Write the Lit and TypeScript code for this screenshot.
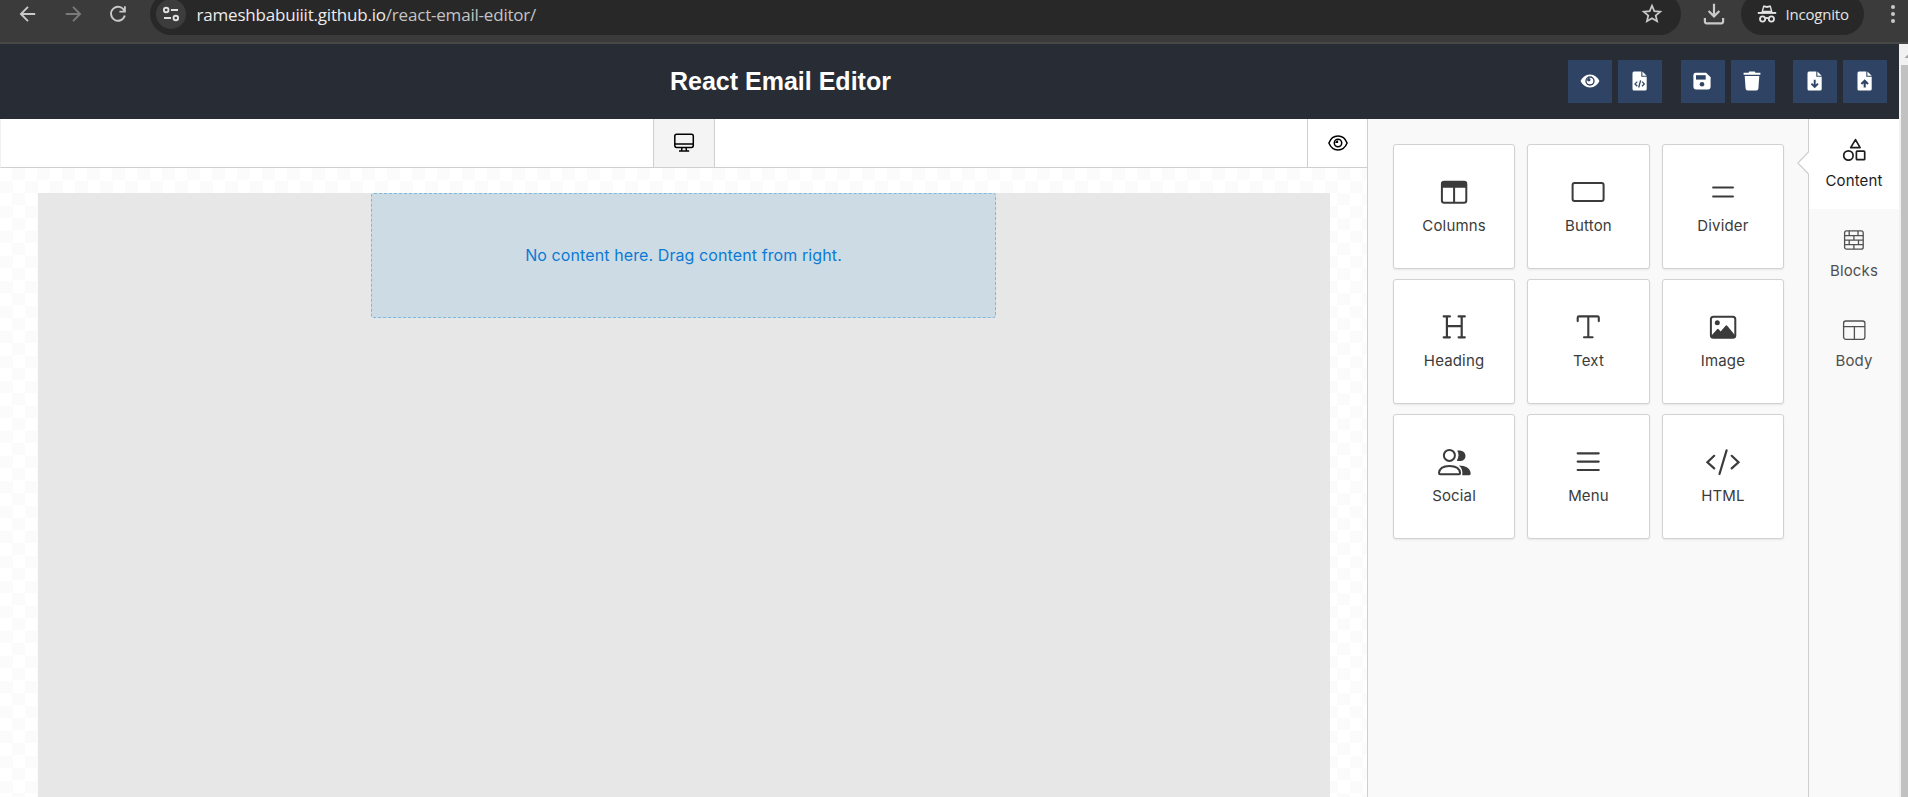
import { LitElement, html, svg, css, SVGTemplateResult } from "lit";
import { customElement } from "lit/decorators.js";

/* Browser chrome glyphs, 24 x 24 */
const back = svg`<path d="M19.2 12H5.3M12 4.9L4.9 12l7.1 7.1" fill="none" stroke="currentColor" stroke-width="1.9"/>`;
const forward = svg`<path d="M4.800 12h13.900M12 4.900l7.100 7.100-7.100 7.100" fill="none" stroke="currentColor" stroke-width="1.900"/>`;
const reload = svg`<path d="M18.300 8.600A7 7 0 1 0 18.800 13.600M18.900 4.200V9.600H13.400" fill="none" stroke="currentColor" stroke-width="1.900"/>`;
const tune = svg`<g fill="none" stroke="currentColor" stroke-width="1.900"><circle cx="7.200" cy="8" r="2.300"/><path d="M12 8h7M5 16h7"/><circle cx="16.800" cy="16" r="2.300"/></g>`;
const star = svg`<path d="M12 3.600l2.300 5.500 6 .5-4.600 3.900 1.400 5.800L12 16.200l-5.100 3.100 1.400-5.800-4.600-3.900 6-.5z" fill="none" stroke="currentColor" stroke-width="1.700"/>`;
const download = svg`<path d="M12 1.800v12.400M6.600 9l5.400 5.400L17.400 9M2.900 16v3.600q0 1.700 1.700 1.700h14.800q1.700 0 1.700-1.700V16" fill="none" stroke="currentColor" stroke-width="2.200"/>`;
const incognito = svg`<path d="M6.400 10.200L8 4.200q.3-1.100 1.400-.8l2.600.7 2.600-.7q1.100-.3 1.400.8l1.600 6z" fill="currentColor"/><path d="M9.200 5.200l2.800.8 2.800-.8 1 3.600H8.200z" fill="#282828"/><path d="M2.800 10h18.400v1.900H2.800z" fill="currentColor"/><g fill="none" stroke="currentColor" stroke-width="1.800"><circle cx="7.600" cy="17" r="2.600"/><circle cx="16.400" cy="17" r="2.600"/><path d="M10.200 16.500q1.800-1.100 3.600 0"/></g>`;
const dots = svg`<g fill="currentColor"><circle cx="12" cy="5" r="2"/><circle cx="12" cy="12" r="2"/><circle cx="12" cy="19" r="2"/></g>`;

/* Header action glyphs, 20 x 20 */
const eye = svg`<path d="M10 3.600c4.500 0 7.800 3 9.400 6.400-1.600 3.400-4.900 6.400-9.400 6.400S2.200 13.400.6 10C2.200 6.600 5.500 3.600 10 3.600z" fill="#fff"/><circle cx="10" cy="10" r="4.700" fill="#2f4464"/><circle cx="10" cy="10" r="3.300" fill="#fff"/><circle cx="8.800" cy="8.800" r="1.700" fill="#2f4464"/>`;
const sheet = svg`<path d="M4 .6h7.300v5.200h5.400v12.100q0 1.600-1.600 1.600H4q-1.500 0-1.500-1.600V2.200Q2.500.6 4 .6z" fill="#fff"/><path d="M12.400.6l4.300 4.100h-4.300z" fill="#fff"/>`;
const fileCode = svg`${sheet}<path d="M7.300 10.600l-2.300 2.300 2.300 2.300M12 10.600l2.300 2.300-2.300 2.300M10.600 9.300l-1.900 7.200" fill="none" stroke="#2f4464" stroke-width="1.300"/>`;
const fileDown = svg`${sheet}<path d="M9.700 8.800v7M6.400 12.700l3.300 3.300 3.300-3.300" fill="none" stroke="#2f4464" stroke-width="1.900"/>`;
const fileUp = svg`${sheet}<path d="M9.700 16.600v-6M6.400 13l3.300-3.300L13 13" fill="none" stroke="#2f4464" stroke-width="2.100"/>`;
const save = svg`<path d="M3.700 1.700h10.400l4.500 4.500v9.900q0 2.300-2.300 2.300H3.700q-2.300 0-2.300-2.300V4q0-2.300 2.300-2.300z" fill="#fff"/><path d="M4 4.200h9.700v4.400H4z" fill="#2f4464"/><circle cx="10" cy="13.300" r="2.300" fill="#2f4464"/>`;
const trash = svg`<path d="M1.600 1.700h5l.6-1.100h5.600l.6 1.100h5v2H1.600zM2.700 5h14.600l-.9 12.600q-.2 1.900-2 1.900H5.600q-1.800 0-2-1.900z" fill="#fff"/>`;

/* Toolbar glyphs, 24 x 24 */
const desktop = svg`<g fill="none" stroke="#000" stroke-width="1.500"><rect x="2.800" y="3.200" width="18.500" height="13.200" rx="1.800"/><path d="M2.800 12.900h18.500M10 16.500l-.5 3.400M14 16.500l.5 3.400M7 20.100h10.200"/></g>`;
const eyeLine = svg`<g fill="none" stroke="#000" stroke-width="1.500"><path d="M2.900 12C4.700 7.500 8 5.100 12 5.100s7.300 2.400 9.100 6.900c-1.800 4.500-5.100 6.900-9.100 6.900S4.700 16.500 2.900 12z"/><circle cx="12" cy="12" r="3.700"/></g><path d="M9.200 12h2.900V9.200A3.300 3.300 0 0 0 9.200 12z" fill="#000"/>`;

/* Tool glyphs, 40 x 32 */
const columns = svg`<rect x="7.900" y="5.700" width="24.400" height="21" rx="2.300" fill="none" stroke="currentColor" stroke-width="2"/><path d="M7.500 6h25v5.800h-25zM19.100 11h2v16h-2z" fill="currentColor"/>`;
const button = svg`<rect x="4.600" y="7.100" width="31" height="17.900" rx="2" fill="none" stroke="currentColor" stroke-width="2"/>`;
const divider = svg`<path d="M10.100 11.500h19.900M10.100 20.500h19.900" stroke="currentColor" stroke-width="2" stroke-linecap="round"/>`;
const heading = svg`<path d="M9.700 5.400h6.200M24.600 5.400h6.200M9.700 26.300h6.200M24.600 26.300h6.200M12.900 5.400v20.900M27.700 5.400v20.900M12.900 15.200h14.800" stroke="currentColor" stroke-width="2.200" stroke-linecap="round"/>`;
const text = svg`<path d="M9.700 10.100V6.700q0-1.300 1.300-1.300h18.500q1.300 0 1.300 1.300v3.400M20.300 5.400v20.900M16 26.300h8.600" fill="none" stroke="currentColor" stroke-width="2.100" stroke-linecap="round"/>`;
const image = svg`<rect x="7.900" y="5.700" width="24.400" height="21" rx="2.500" fill="none" stroke="currentColor" stroke-width="2"/><circle cx="14.300" cy="11.800" r="2.500" fill="currentColor"/><path d="M8.500 26.500V24.500l5.600-6.300q.8-.8 1.600 0l1.900 2.400 5-5.900q.8-.9 1.600 0l7.600 9.300v2.500z" fill="currentColor"/>`;
const social = svg`<g fill="none" stroke="currentColor" stroke-width="2"><circle cx="15.400" cy="9.400" r="5.500"/><path d="M6 28.200q-1 0-1-1.200c.4-4.600 4-7.100 10.400-7.100s10.300 2.500 10.700 7.100q0 1.200-1 1.200z"/></g><path d="M23.200 4.600c4.600-.8 8.300 1.400 8.300 5.300s-3.900 6.200-8.700 4.800c2.100-3.300 2.300-6.800.4-10.100zM24.800 19.400c7 .2 11.500 2.500 11.900 8.200q0 1.600-1.300 1.600h-7.200c.7-4-.2-7.400-3.400-9.800z" fill="currentColor"/>`;
const menu = svg`<path d="M9.700 7.300h21M9.700 15.600h21M9.700 24h21" stroke="currentColor" stroke-width="2.200" stroke-linecap="round"/>`;
const code = svg`<path d="M11.200 9.800L4.400 16.200l6.800 6.200M28.700 9.800l6.800 6.400-6.800 6.200M23.600 4.400L16.500 28" fill="none" stroke="currentColor" stroke-width="2.200" stroke-linecap="round"/>`;

/* Rail glyphs, 24 x 24 */
const shapes = svg`<g fill="none" stroke="currentColor" stroke-width="1.700" stroke-linejoin="round"><path d="M13.500 1.600l4.600 8H8.700z"/><circle cx="6.400" cy="17.500" r="4.700"/><rect x="14.400" y="13.100" width="8.300" height="8.600" rx=".8"/></g>`;
const blocks = svg`<g fill="none" stroke="currentColor" stroke-width="1.300"><rect x="2.600" y="2.900" width="18.600" height="18.300" rx="2"/><path d="M2.600 7.600h18.600M2.600 12.100h18.600M2.600 16.700h18.600M7.200 3v4.600M16 3v4.600M11.900 7.600v4.500M7.200 12.100v4.600M16.500 12.100v4.600M11.900 16.700v4.500"/></g>`;
const body = svg`<g fill="none" stroke="currentColor" stroke-width="1.300"><rect x="1.600" y="3" width="21.300" height="18.300" rx="2.200"/><path d="M1.600 8.700h21.300M12.400 8.700v12.600"/></g>`;

const icon = (w: number, h: number, art: SVGTemplateResult) =>
  html`<svg width=${w} height=${h} viewBox="0 0 ${w} ${h}" aria-hidden="true">${art}</svg>`;

@customElement("browser-bar")
class BrowserBar extends LitElement {
  static styles = css`
    :host { display: block; height: 42px; overflow: hidden; background: #3b3b3b; border-bottom: 2px solid #484946; color: #c9c9c9; }
    svg { display: block; flex: none; }
    .row { display: flex; align-items: center; height: 42px; margin-top: -7px; padding-left: 15.5px; padding-right: 3.5px; }
    .nav { display: flex; gap: 21px; margin: -1px 20.5px 0 0; }
    .off { color: #7a7a7a; }
    .url { flex: 1; display: flex; align-items: center; height: 42px; padding: 0 17.5px 0 6px; border-radius: 21px; background: #282828; box-sizing: border-box; }
    .site { display: flex; align-items: center; justify-content: center; width: 30px; height: 30px; border-radius: 50%; background: #3c3c3c; color: #e0e0e0; }
    .address { flex: 1; margin: 2px 0 0 10.5px; font: 17px/24px "Open Sans", "Noto Sans", sans-serif; letter-spacing: -0.2px; color: #c4c4c4; white-space: nowrap; }
    .host { color: #ececec; }
    .download { margin: 0 15.5px 0 20.5px; }
    .incognito { display: flex; align-items: center; width: 123px; height: 42px; margin: -1px 16.5px 0 0; padding-left: 14px; box-sizing: border-box; border-radius: 21px; background: #282828; color: #e3e3e3; font: 15px/20px "Open Sans", "Noto Sans", sans-serif; letter-spacing: -0.2px; }
    .incognito svg { margin-right: 6.5px; }
  `;
  render() {
    return html`<div class="row">
      <div class="nav">${icon(24, 24, back)}<span class="off">${icon(24, 24, forward)}</span>${icon(24, 24, reload)}</div>
      <div class="url">
        <span class="site">${icon(24, 24, tune)}</span>
        <span class="address"><span class="host">rameshbabuiiit.github.io</span>/react-email-editor/</span>
        ${icon(24, 24, star)}
      </div>
      <span class="download">${icon(24, 24, download)}</span>
      <div class="incognito">${icon(24, 24, incognito)}<span class="word">Incognito</span></div>
      ${icon(24, 24, dots)}
    </div>`;
  }
}

@customElement("editor-header")
class EditorHeader extends LitElement {
  static styles = css`
    :host { display: grid; grid-template-columns: 1fr auto; height: 75px; background: #282c34; color: #fff; }
    .title { margin: 0; padding: 23px 0 0 670px; font: bold 25px/29px "Liberation Sans", Arial, sans-serif; white-space: nowrap; }
    .actions { display: flex; padding: 16px 12px 0 0; gap: 18.5px; }
    .pair { display: flex; gap: 6px; }
    .action { display: flex; align-items: center; justify-content: center; width: 44px; height: 43px; padding: 0 1px 1px 0; border: 0; background: #2f4464; }
    svg { display: block; }
  `;
  render() {
    const pairs = [[eye, fileCode], [save, trash], [fileDown, fileUp]];
    return html`<h1 class="title">React Email Editor</h1>
      <div class="actions">${pairs.map((p) => html`<div class="pair">${p.map((a) => html`<button class="action">${icon(20, 20, a)}</button>`)}</div>`)}</div>`;
  }
}

@customElement("design-canvas")
class DesignCanvas extends LitElement {
  static styles = css`
    :host { display: flex; flex-direction: column; min-height: 0; }
    .toolbar { display: flex; height: 49px; box-sizing: border-box; border-left: 1px solid #f1f1f1; border-bottom: 1px solid #cfcfcf; background: #fff; }
    .space { flex: 1; }
    .device { display: flex; align-items: center; justify-content: center; width: 62px; margin-left: 652px; box-sizing: border-box; border: solid #cfcfcf; border-width: 0 1px; background: #f4f4f4; }
    .preview { display: flex; align-items: center; justify-content: center; width: 60px; box-sizing: border-box; border-left: 1px solid #cfcfcf; }
    svg { display: block; }
    .board { flex: 1; min-height: 0; padding: 25px 37px 0 38px; background: #fff conic-gradient(#fbfbfb 25%, #fff 0 50%, #fbfbfb 0 75%, #fff 0) 0 0 / 25px 25px; }
    .page { height: 100%; display: flex; justify-content: center; align-items: flex-start; background: #e7e7e7; }
    .drop { display: flex; align-items: center; justify-content: center; width: 625px; height: 125px; margin-right: 1px; padding-bottom: 2px; box-sizing: border-box; border: 1px dashed #7db9dd; border-radius: 3px; background: #cddbe4; color: #0b7ad5; font: 16px/22px Inter, sans-serif; letter-spacing: 0.1px; white-space: nowrap; }
  `;
  render() {
    return html`<div class="toolbar"><span class="device">${icon(24, 24, desktop)}</span><span class="space"></span><span class="preview">${icon(24, 24, eyeLine)}</span></div>
      <div class="board"><div class="page"><div class="drop"><span class="hint">No content here. Drag content from right.</span></div></div></div>`;
  }
}

@customElement("tool-panel")
class ToolPanel extends LitElement {
  static styles = css`
    :host { display: block; border-left: 1px solid #cfcfcf; background: #f9f9f9; box-sizing: border-box; }
    .tools { display: grid; grid-template-columns: repeat(3, 1fr); grid-auto-rows: 125px; gap: 10px 12.3px; padding: 25px 24px 0 25px; }
    .tool { display: flex; flex-direction: column; align-items: center; box-sizing: border-box; padding-top: 31px; border: 1px solid #d2d2d2; border-radius: 3px; background: #fff; box-shadow: 0 1px 2px rgba(0, 0, 0, 0.08); color: #3b3b3b; }
    .label { margin-top: 8px; font: 15px/20px Inter, sans-serif; letter-spacing: 0.15px; }
    svg { display: block; }
  `;
  render() {
    const tools: [string, SVGTemplateResult][] = [
      ["Columns", columns], ["Button", button], ["Divider", divider],
      ["Heading", heading], ["Text", text], ["Image", image],
      ["Social", social], ["Menu", menu], ["HTML", code],
    ];
    return html`<div class="tools">${tools.map(([name, art]) => html`<div class="tool">${icon(40, 32, art)}<span class="label">${name}</span></div>`)}</div>`;
  }
}

@customElement("tab-rail")
class TabRail extends LitElement {
  static styles = css`
    :host { display: block; position: relative; border-left: 1px solid #cfcfcf; background: #f9f9f9; box-sizing: border-box; }
    .tab { display: flex; flex-direction: column; align-items: center; height: 90px; box-sizing: border-box; padding-top: 19px; color: #505050; font: 15px/20px Inter, sans-serif; letter-spacing: 0.15px; }
    .active { background: #fff; color: #1c1c1c; }
    .label { margin-top: 9px; }
    .pointer { position: absolute; left: -12px; top: 32px; }
    svg { display: block; }
  `;
  render() {
    const tabs: [string, SVGTemplateResult][] = [["Content", shapes], ["Blocks", blocks], ["Body", body]];
    return html`${tabs.map(([name, art], i) => html`<div class="tab ${i === 0 ? "active" : ""}">${icon(24, 24, art)}<span class="label">${name}</span></div>`)}
      <span class="pointer">${icon(12, 24, svg`<path d="M12 .8L.8 12 12 23.200z" fill="#fff"/><path d="M11.500 1L.8 12l10.700 11" fill="none" stroke="#cfcfcf" stroke-width="1.200"/>`)}</span>`;
  }
}

@customElement("app-root")
class AppRoot extends LitElement {
  static styles = css`
    :host { display: flex; flex-direction: column; height: 100vh; overflow: hidden; }
    .view { flex: 1; min-height: 0; display: grid; grid-template-columns: 1fr 9px; }
    .document { display: flex; flex-direction: column; min-height: 0; }
    .editor { flex: 1; min-height: 0; display: grid; grid-template-columns: 1367px 441px 1fr; }
    .scroll { display: flex; flex-direction: column; padding-left: 2px; background: #f1f1f1; overflow: hidden; }
    .up { display: block; height: 21px; }
    .thumb { flex: 1; background: #c1c1c1; }
  `;
  render() {
    return html`<browser-bar></browser-bar>
      <div class="view">
        <div class="document">
          <editor-header></editor-header>
          <div class="editor"><design-canvas></design-canvas><tool-panel></tool-panel><tab-rail></tab-rail></div>
        </div>
        <div class="scroll"><svg class="up" width="7" height="21" viewBox="0 0 7 21"><path d="M3.500 14L8 9.500V14z" fill="#a3a3a3"/></svg><div class="thumb"></div></div>
      </div>`;
  }
}
